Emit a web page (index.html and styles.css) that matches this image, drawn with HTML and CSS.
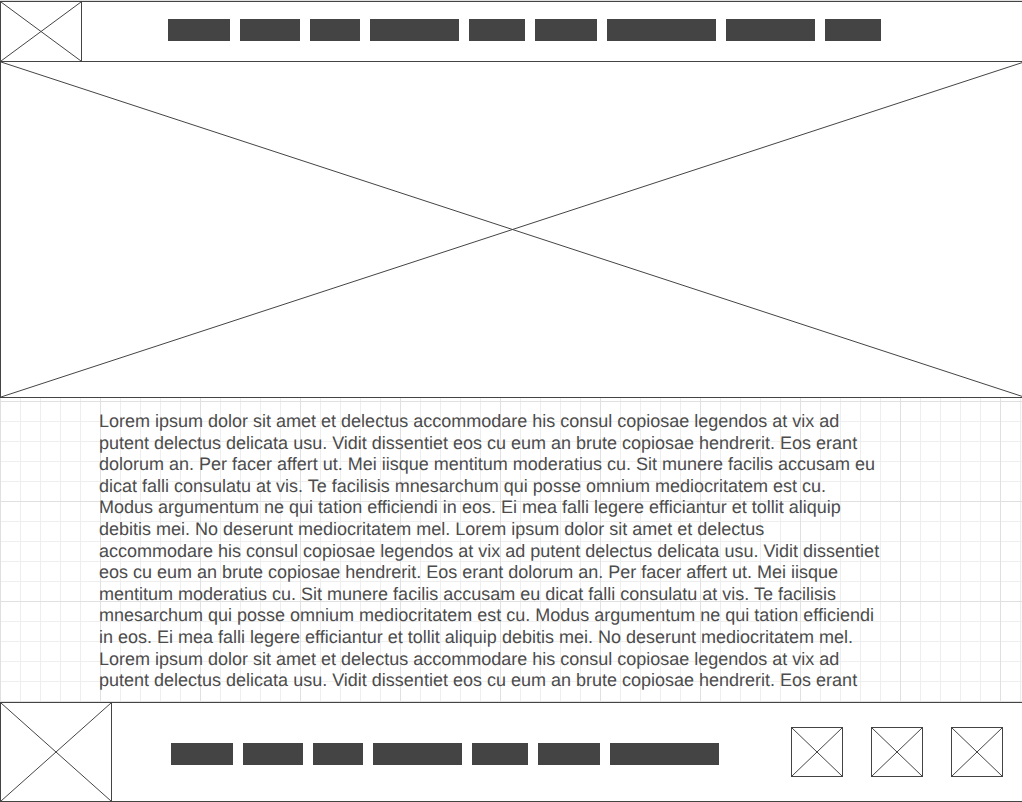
FILE: index.html
```
<!DOCTYPE html>
<html lang="en">
<head>
<meta charset="utf-8">
<meta name="viewport" content="width=device-width, initial-scale=1">
<title>Wireframe</title>
<link rel="stylesheet" href="styles.css">
</head>
<body>
<header class="bar header">
  <svg class="cross logo" role="img" aria-label="Logo"><line x1="0" y1="0" x2="100%" y2="100%"/><line x1="0" y1="100%" x2="100%" y2="0"/></svg>
  <nav class="links" aria-label="Main">
    <a class="link w62" href="#" aria-label="Link 1"></a>
    <a class="link w60" href="#" aria-label="Link 2"></a>
    <a class="link w50" href="#" aria-label="Link 3"></a>
    <a class="link w89" href="#" aria-label="Link 4"></a>
    <a class="link w56" href="#" aria-label="Link 5"></a>
    <a class="link w62" href="#" aria-label="Link 6"></a>
    <a class="link w109" href="#" aria-label="Link 7"></a>
    <a class="link w89" href="#" aria-label="Link 8"></a>
    <a class="link w56" href="#" aria-label="Link 9"></a>
  </nav>
</header>
<main>
  <div class="hero">
    <svg class="cross hero-image" role="img" aria-label="Banner image"><line x1="0" y1="0" x2="100%" y2="100%"/><line x1="0" y1="100%" x2="100%" y2="0"/></svg>
  </div>
  <section class="content">
    <p class="text">Lorem ipsum dolor sit amet et delectus accommodare his consul copiosae legendos at vix ad<br>
    putent delectus delicata usu. Vidit dissentiet eos cu eum an brute copiosae hendrerit. Eos erant<br>
    dolorum an. Per facer affert ut. Mei iisque mentitum moderatius cu. Sit munere facilis accusam eu<br>
    dicat falli consulatu at vis. Te facilisis mnesarchum qui posse omnium mediocritatem est cu.<br>
    Modus argumentum ne qui tation efficiendi in eos. Ei mea falli legere efficiantur et tollit aliquip<br>
    debitis mei. No deserunt mediocritatem mel. Lorem ipsum dolor sit amet et delectus<br>
    accommodare his consul copiosae legendos at vix ad putent delectus delicata usu. Vidit dissentiet<br>
    eos cu eum an brute copiosae hendrerit. Eos erant dolorum an. Per facer affert ut. Mei iisque<br>
    mentitum moderatius cu. Sit munere facilis accusam eu dicat falli consulatu at vis. Te facilisis<br>
    mnesarchum qui posse omnium mediocritatem est cu. Modus argumentum ne qui tation efficiendi<br>
    in eos. Ei mea falli legere efficiantur et tollit aliquip debitis mei. No deserunt mediocritatem mel.<br>
    Lorem ipsum dolor sit amet et delectus accommodare his consul copiosae legendos at vix ad<br>
    putent delectus delicata usu. Vidit dissentiet eos cu eum an brute copiosae hendrerit. Eos erant</p>
  </section>
</main>
<footer class="bar footer">
  <svg class="cross footer-logo" role="img" aria-label="Footer logo"><line x1="0" y1="0" x2="100%" y2="100%"/><line x1="0" y1="100%" x2="100%" y2="0"/></svg>
  <nav class="links footer-links" aria-label="Footer">
    <a class="link w62" href="#" aria-label="Link 1"></a>
    <a class="link w60" href="#" aria-label="Link 2"></a>
    <a class="link w50" href="#" aria-label="Link 3"></a>
    <a class="link w89" href="#" aria-label="Link 4"></a>
    <a class="link w56" href="#" aria-label="Link 5"></a>
    <a class="link w62" href="#" aria-label="Link 6"></a>
    <a class="link w109" href="#" aria-label="Link 7"></a>
  </nav>
  <div class="social">
    <a class="social-link" href="#" aria-label="Social 1"><svg class="cross icon"><line x1="0" y1="0" x2="100%" y2="100%"/><line x1="0" y1="100%" x2="100%" y2="0"/></svg></a>
    <a class="social-link" href="#" aria-label="Social 2"><svg class="cross icon"><line x1="0" y1="0" x2="100%" y2="100%"/><line x1="0" y1="100%" x2="100%" y2="0"/></svg></a>
    <a class="social-link" href="#" aria-label="Social 3"><svg class="cross icon"><line x1="0" y1="0" x2="100%" y2="100%"/><line x1="0" y1="100%" x2="100%" y2="0"/></svg></a>
  </div>
</footer>
</body>
</html>
```
FILE: styles.css
```
* {
  box-sizing: border-box;
}

body {
  margin: 0;
  border-top: 1px solid #e0e0e0;
  background: #fff;
  color: #4c4c4c;
  font-family: "Liberation Sans", Arial, sans-serif;
  font-size: 18px;
  line-height: 1.2;
}

.bar {
  display: flex;
  border-top: 1px solid #444;
  border-bottom: 1px solid #444;
  background: #fff;
}

.header {
  height: 61px;
}

.cross {
  display: block;
  flex: none;
  stroke: #444;
  stroke-width: 1px;
}

.logo {
  width: 82px;
  height: 100%;
  border-left: 1px solid #444;
  border-right: 1px solid #444;
}

.links {
  display: flex;
  gap: 10px;
  padding-top: 17px;
  margin-left: 86px;
}

.link {
  height: 22px;
  background: #444;
}

.w50 { width: 50px; }
.w56 { width: 56px; }
.w60 { width: 60px; }
.w62 { width: 62px; }
.w89 { width: 89px; }
.w109 { width: 109px; }

.hero {
  overflow: hidden;
  border-left: 1px solid #444;
  border-bottom: 1px solid #444;
  background: #fff;
}

.hero-image {
  width: calc(100% + 2px);
  height: 335px;
}

.content {
  padding: 13px 99px 10px;
  background-image:
    linear-gradient(#e0e0e0 1px, transparent 1px),
    linear-gradient(90deg, #e0e0e0 1px, transparent 1px),
    linear-gradient(#eee 1px, transparent 1px),
    linear-gradient(90deg, #eee 1px, transparent 1px);
  background-size: 100px 100px, 100px 100px, 20px 20px, 20px 20px;
  background-position: 0 3px;
}

.text {
  margin: 0;
  text-rendering: geometricPrecision;
}

.footer {
  height: 100px;
}

.footer-logo {
  width: 112px;
  height: 100%;
  border-left: 1px solid #444;
  border-right: 1px solid #444;
}

.footer-links {
  padding-top: 40px;
  margin-left: 59px;
}

.social {
  display: flex;
  align-items: flex-start;
  gap: 28px;
  margin-left: auto;
  padding: 24px 19px 0 0;
}

.icon {
  width: 52px;
  height: 50px;
  border: 1px solid #444;
}
```
